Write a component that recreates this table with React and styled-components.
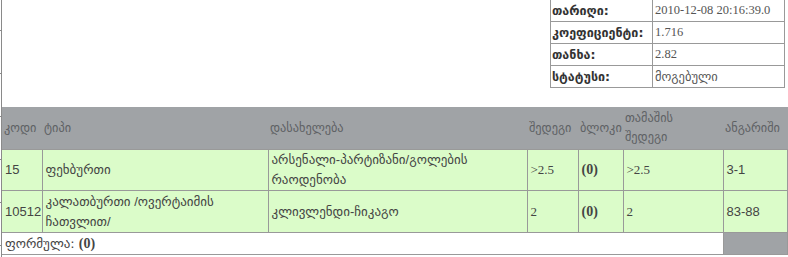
import { createGlobalStyle, styled } from "styled-components";

const GlobalStyle = createGlobalStyle`
  html, body {
    margin: 0;
    padding: 0;
    background: #fff;
  }
  body {
    font-family: "Liberation Sans", "DejaVu Sans", sans-serif;
    font-size: 13px;
    color: #444;
  }
`;

const info = [
  { label: "თარიღი:", value: "2010-12-08 20:16:39.0", serif: true },
  { label: "კოეფიციენტი:", value: "1.716", serif: true },
  { label: "თანხა:", value: "2.82", serif: true },
  { label: "სტატუსი:", value: "მოგებული" },
];

const rows = [
  {
    code: "15",
    type: "ფეხბურთი",
    name: "არსენალი-პარტიზანი/გოლების რაოდენობა",
    result: ">2.5",
    block: "(0)",
    gameResult: ">2.5",
    score: "3-1",
    height: 40,
  },
  {
    code: "10512",
    type: "კალათბურთი /ოვერტაიმის ჩათვლით/",
    name: "კლივლენდი-ჩიკაგო",
    result: "2",
    block: "(0)",
    gameResult: "2",
    score: "83-88",
    height: 42,
  },
];

const App = () => {
  return (
    <>
      <GlobalStyle />
      <Page>
        <Rail />
        <Content>
          <InfoWrap>
            <InfoTable>
              <tbody>
                {info.map((item) => (
                  <tr key={item.label}>
                    <InfoLabel>{item.label}</InfoLabel>
                    <InfoValue $serif={item.serif}>{item.value}</InfoValue>
                  </tr>
                ))}
              </tbody>
            </InfoTable>
          </InfoWrap>

          <BetTable>
            <colgroup>
              <col style={{ width: 40 }} />
              <col style={{ width: 226 }} />
              <col style={{ width: 259 }} />
              <col style={{ width: 51 }} />
              <col style={{ width: 45 }} />
              <col style={{ width: 100 }} />
              <col />
            </colgroup>
            <thead>
              <tr>
                <Th>კოდი</Th>
                <Th>ტიპი</Th>
                <Th>დასახელება</Th>
                <Th>შედეგი</Th>
                <Th>ბლოკი</Th>
                <Th>
                  თამაშის
                  <br />
                  შედეგი
                </Th>
                <Th>ანგარიში</Th>
              </tr>
            </thead>
            <tbody>
              {rows.map((row) => (
                <BodyRow key={row.code} style={{ height: row.height }}>
                  <Td>{row.code}</Td>
                  <Td>{row.type}</Td>
                  <Td>{row.name}</Td>
                  <Td $serif>{row.result}</Td>
                  <Td $serif $bold>
                    {row.block}
                  </Td>
                  <Td $serif>{row.gameResult}</Td>
                  <Td>{row.score}</Td>
                </BodyRow>
              ))}
              <FooterRow>
                <FooterCell colSpan={6}>
                  ფორმულა: <Bold>(0)</Bold>
                </FooterCell>
                <FooterFill />
              </FooterRow>
            </tbody>
          </BetTable>
        </Content>
      </Page>
    </>
  );
};

const Page = styled.div`
  display: flex;
  width: 788px;
  height: 257px;
  overflow: hidden;
`;

const Rail = styled.div`
  flex: 0 0 1px;
  background: repeating-linear-gradient(
    to bottom,
    transparent 0 30px,
    #8a8a8a 30px 31px,
    transparent 31px 43px
  );
  border-right: 1px solid #8a8a8a;
`;

const Content = styled.div`
  flex: 1;
  display: flex;
  flex-direction: column;
  gap: 19px;
  margin-top: -1px;
`;

const InfoWrap = styled.div`
  display: flex;
  justify-content: flex-end;
  padding-right: 3px;
`;

const InfoTable = styled.table`
  border-collapse: collapse;
  border: 1px solid #999;
  width: 235px;
`;

const InfoLabel = styled.td`
  border: 1px solid #999;
  height: 21px;
  padding: 0 1px;
  width: 99px;
  font-weight: bold;
  color: #333;
  font-family: "DejaVu Sans", sans-serif;
  font-size: 12.5px;
  white-space: nowrap;
`;

const InfoValue = styled.td`
  border: 1px solid #999;
  height: 21px;
  padding: 0 2px;
  color: #555;
  white-space: nowrap;
  font-family: ${(p) =>
    p.$serif ? `"Liberation Serif", serif` : `"DejaVu Sans", sans-serif`};
  font-size: 12.5px;
`;

const BetTable = styled.table`
  border-collapse: collapse;
  width: 786px;
  table-layout: fixed;
`;

const Th = styled.th`
  background: #a0a3a6;
  color: #5e6164;
  font-weight: normal;
  text-align: left;
  height: 42px;
  padding: 0 1px 0 2px;
  font-size: 12.3px;
  line-height: 19px;
  font-family: "DejaVu Sans", sans-serif;
  white-space: nowrap;
`;

const BodyRow = styled.tr`
  background: #dbfcc9;
`;

const Td = styled.td`
  border: 1px solid #999;
  padding: 0 3px;
  vertical-align: middle;
  line-height: 20px;
  color: #444;
  font-family: ${(p) =>
    p.$serif
      ? `"Liberation Serif", "DejaVu Sans", serif`
      : `"Liberation Sans", "DejaVu Sans", sans-serif`};
  font-size: ${(p) => (p.$bold ? "14px" : "13px")};
  font-weight: ${(p) => (p.$bold ? "bold" : "normal")};
  &:first-child {
    border-left: none;
  }
`;

const FooterRow = styled.tr`
  height: 22px;
`;

const FooterCell = styled.td`
  border: 1px solid #999;
  border-left: none;
  padding: 0 3px;
  background: #fff;
  font-family: "DejaVu Sans", sans-serif;
  font-size: 13px;
  color: #444;
`;

const FooterFill = styled.td`
  border: 1px solid #999;
  background: #a0a3a6;
`;

const Bold = styled.b`
  font-family: "Liberation Serif", serif;
  font-size: 14px;
`;

export default App;
